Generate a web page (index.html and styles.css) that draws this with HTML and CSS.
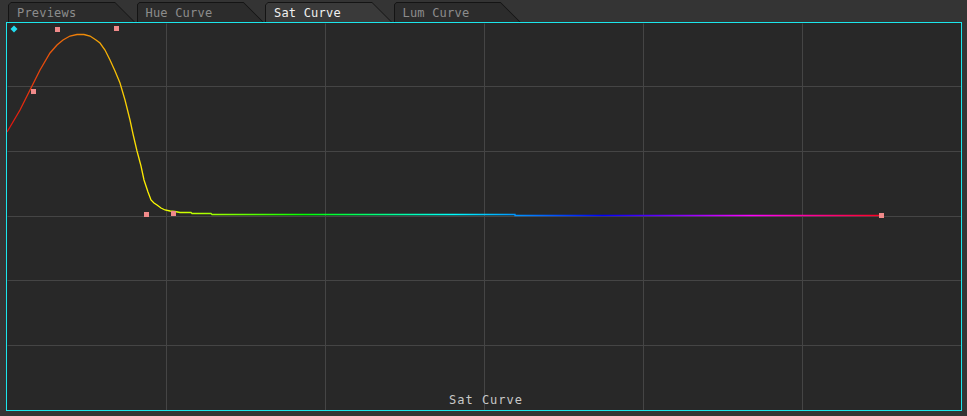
FILE: index.html
```html
<!DOCTYPE html>
<html>
<head>
<meta charset="utf-8">
<link rel="stylesheet" href="styles.css">
</head>
<body>
<div class="app">
  <div class="tabs">
    <div class="tab"><span>Previews</span></div>
    <div class="tab"><span>Hue Curve</span></div>
    <div class="tab active"><span>Sat Curve</span></div>
    <div class="tab"><span>Lum Curve</span></div>
  </div>
  <div class="panel">
    <svg class="chart" width="954" height="387" viewBox="0 0 954 387">
      <defs>
        <linearGradient id="hue" gradientUnits="userSpaceOnUse" x1="0" y1="0" x2="893" y2="0">
          <stop offset="0" stop-color="#e01010"/>
          <stop offset="0.1667" stop-color="#ffff00"/>
          <stop offset="0.3333" stop-color="#00ff00"/>
          <stop offset="0.5" stop-color="#00ffff"/>
          <stop offset="0.6667" stop-color="#0000ff"/>
          <stop offset="0.8333" stop-color="#ff00ff"/>
          <stop offset="1" stop-color="#ff0000"/>
        </linearGradient>
      </defs>
      <g class="grid" transform="translate(0.5 0.5)">
        <line x1="159" y1="0" x2="159" y2="387"/>
        <line x1="318" y1="0" x2="318" y2="387"/>
        <line x1="477" y1="0" x2="477" y2="387"/>
        <line x1="636" y1="0" x2="636" y2="387"/>
        <line x1="795" y1="0" x2="795" y2="387"/>
        <line x1="0" y1="63" x2="954" y2="63"/>
        <line x1="0" y1="128" x2="954" y2="128"/>
        <line x1="0" y1="193" x2="954" y2="193"/>
        <line x1="0" y1="257" x2="954" y2="257"/>
        <line x1="0" y1="322" x2="954" y2="322"/>
      </g>
      <polyline class="curve" stroke="url(#hue)" points="0,109 3,104 13,87 23,67 33,47 43,30 50,22 56,17 63,13 70,11.5 77,11.5 83,13 89,17 93,20 98,27 103,37 108,48 113,60 118,77 123,97 126,111 130,128 134,143 137,157 141,169 144,177 147,180 150,182 154,185 158,187 163,188 168,188.5 173,189.5 184,189.5 185,190.5 204,190.5 205,191.5 508,191.5 508,192.5 874,192.5"/>
      <g class="pts">
        <rect x="48" y="4" width="5" height="5"/>
        <rect x="107" y="3" width="5" height="5"/>
        <rect x="24" y="66" width="5" height="5"/>
        <rect x="137" y="189" width="5" height="5"/>
        <rect x="164" y="188" width="5" height="5"/>
        <rect x="872" y="190" width="5" height="5"/>
      </g>
      <polygon class="diamond" points="7,2.5 10.5,6 7,9.5 3.5,6"/>
    </svg>
    <div class="label">Sat Curve</div>
  </div>
</div>
</body>
</html>
```
FILE: styles.css
```css
html, body {
  margin: 0;
  padding: 0;
  background: #343434;
  width: 967px;
  height: 416px;
  overflow: hidden;
}
.app {
  display: flex;
  flex-direction: column;
  padding-top: 2px;
}
.tabs {
  display: flex;
  gap: 1.5px;
  padding-left: 8px;
  height: 20px;
}
.tab {
  position: relative;
  width: 127px;
  height: 20px;
  background: #141414;
  clip-path: polygon(0 100%, 0 3px, 3px 0, calc(100% - 20px) 0, 100% 100%);
}
.tab::before {
  content: "";
  position: absolute;
  left: 1px;
  top: 1px;
  right: 1px;
  bottom: 0;
  background: #2c2c2c;
  clip-path: polygon(0 100%, 0 2px, 2px 0, calc(100% - 19px) 0, 100% 100%);
}
.tab.active::before {
  background: #3a3a3a;
}
.tab span {
  position: relative;
  display: block;
  padding-left: 9px;
  padding-top: 2px;
  font-family: "DejaVu Sans Mono", monospace;
  font-size: 12px;
  line-height: 18px;
  color: #8c8c8c;
  letter-spacing: 0.2px;
}
.tab.active span {
  color: #f0f0f0;
}
.panel {
  position: relative;
  margin-left: 6px;
  width: 954px;
  height: 387px;
  border: 1px solid #1ce6ec;
  background: #282828;
}
.chart {
  display: block;
}
.grid line {
  stroke: #454545;
  stroke-width: 1;
}
.curve {
  fill: none;
  stroke-width: 1.3;
}
.pts rect {
  fill: #f08a8a;
}
.diamond {
  fill: #22ddf0;
}
.label {
  position: absolute;
  left: 0;
  right: 0;
  bottom: 3px;
  text-align: center;
  font-family: "DejaVu Sans Mono", monospace;
  font-size: 12px;
  letter-spacing: 1px;
  color: #c8c8c8;
  padding-left: 4px;
}
```
